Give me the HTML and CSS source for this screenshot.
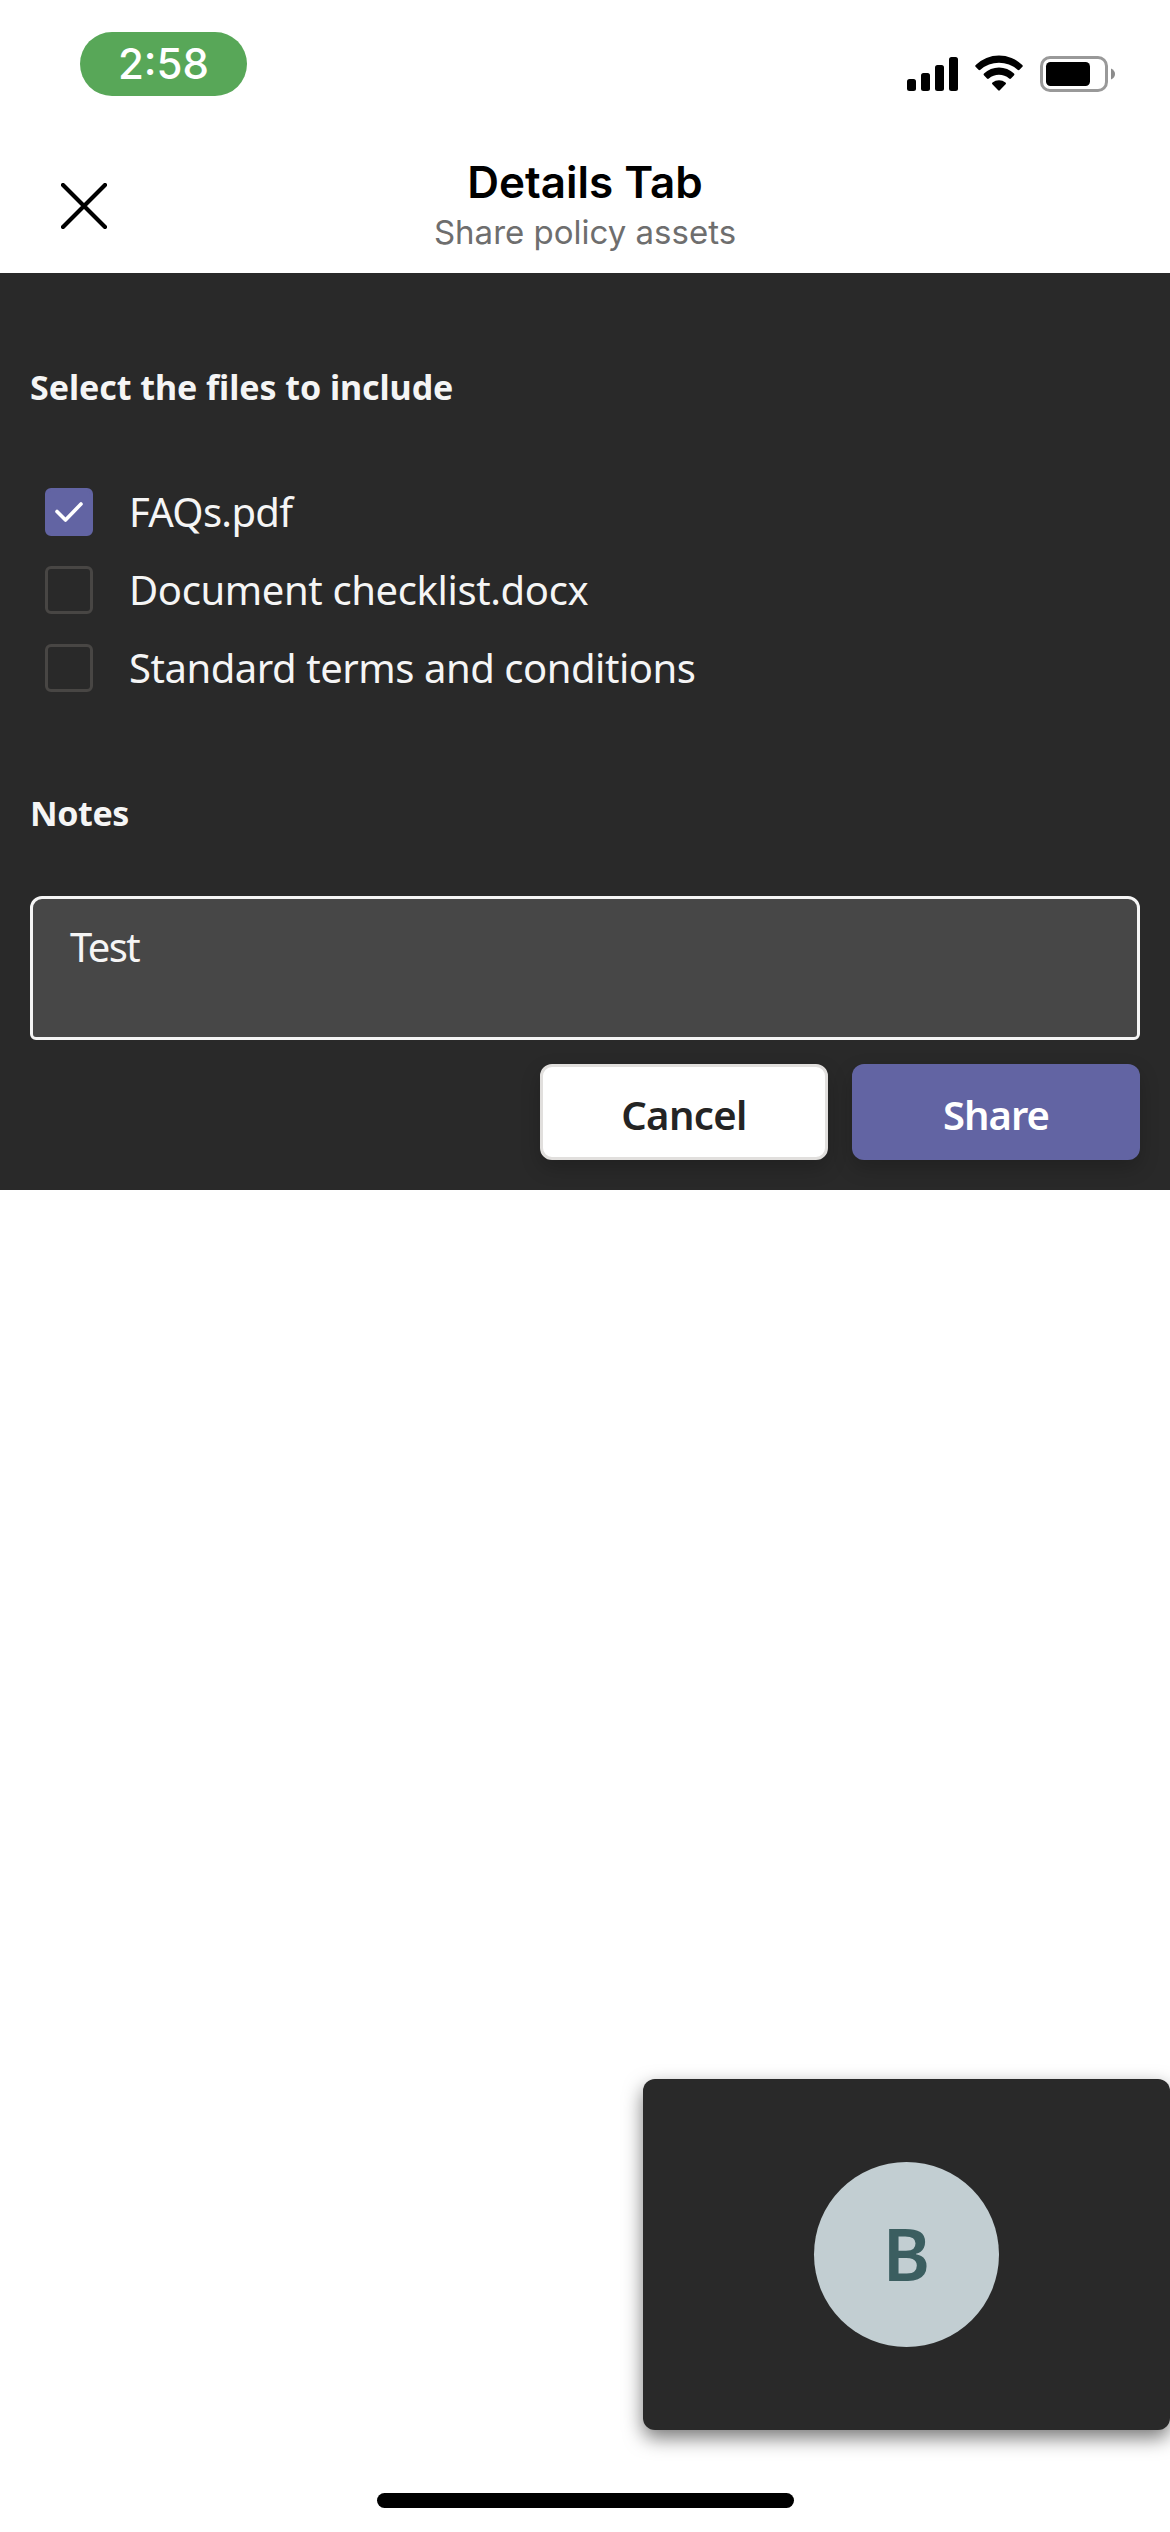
FILE: index.html
```html
<!DOCTYPE html>
<html lang="en">
<head>
<meta charset="utf-8">
<title>Details Tab</title>
<link rel="stylesheet" href="styles.css">
</head>
<body>
<div class="status-bar">
  <div class="time-pill">2:58</div>
  <div class="status-icons">
    <svg class="signal" width="51" height="34" viewBox="0 0 51 34" aria-hidden="true">
      <rect x="0" y="22" width="9" height="12" rx="2.5"/>
      <rect x="14" y="16" width="9" height="18" rx="2.5"/>
      <rect x="28" y="8" width="9" height="26" rx="2.5"/>
      <rect x="42" y="0" width="9" height="34" rx="2.5"/>
    </svg>
    <svg class="wifi" width="48" height="36" viewBox="0 0 48 36" aria-hidden="true">
      <path d="M.7 10A33.5 33.5 0 0 1 47.3 10Q48.2 10.9 47.4 11.7L44.5 14.8Q43.6 15.7 42.6 14.8A28 28 0 0 0 5.4 14.8Q4.4 15.7 3.5 14.8L.6 11.7Q-.2 10.9.7 10Z"/>
      <path d="M9 18.5A21.8 21.8 0 0 1 39 18.5Q39.9 19.4 39.1 20.2L36 23.5Q35.1 24.3 34.1 23.5A15.7 15.7 0 0 0 13.9 23.5Q12.9 24.3 12 23.5L8.9 20.2Q8.1 19.4 9 18.5Z"/>
      <path d="M17.5 27.5A10.5 10.5 0 0 1 30.5 27.5Q31.4 28.4 30.6 29.2L24.8 35.3Q24 36.1 23.2 35.3L17.4 29.2Q16.6 28.4 17.5 27.5Z"/>
    </svg>
    <svg class="battery" width="75" height="36" viewBox="0 0 75 36" aria-hidden="true">
      <rect x="1.5" y="1.5" width="65" height="33" rx="8.5" fill="none" stroke="#999" stroke-width="3"/>
      <rect x="6" y="6" width="44" height="24" rx="4.5"/>
      <path d="M71 12.500Q75 14.500 75 18T71 23.500Z" fill="#8c8c8c"/>
    </svg>
  </div>
</div>
<header class="nav">
  <svg class="close" width="46" height="46" viewBox="0 0 46 46" role="img" aria-label="Close">
    <path d="M2 2 44 44M44 2 2 44"/>
  </svg>
  <div class="titles">
    <h1 class="title">Details Tab</h1>
    <p class="subtitle">Share policy assets</p>
  </div>
</header>
<main class="panel">
  <h2 class="heading">Select the files to include</h2>
  <ul class="files">
    <li class="file">
      <span class="box box-checked">
        <svg width="30" height="22" viewBox="0 0 30 22" aria-hidden="true"><path d="M3 10.5 11.5 19 27 3"/></svg>
      </span>
      <span class="label label-faq">FAQs.pdf</span>
    </li>
    <li class="file"><span class="box"></span><span class="label label-doc">Document checklist.docx</span></li>
    <li class="file"><span class="box"></span><span class="label">Standard terms and conditions</span></li>
  </ul>
  <h2 class="heading heading-notes">Notes</h2>
  <div class="notes">Test</div>
  <div class="actions">
    <button class="btn btn-cancel">Cancel</button>
    <button class="btn btn-share">Share</button>
  </div>
</main>
<aside class="call-tile"><div class="avatar">B</div></aside>
<div class="home-indicator"></div>
</body>
</html>
```

FILE: styles.css
```css
* { box-sizing: border-box; }

body {
  margin: 0;
  width: 1170px;
  height: 2532px;
  display: flex;
  flex-direction: column;
  overflow: hidden;
  background: #fff;
  color: #000;
  font-family: "Noto Sans", sans-serif;
}

.status-bar {
  height: 140px;
  padding: 32px 55px 0 80px;
  display: flex;
  justify-content: space-between;
  align-items: flex-start;
}

.time-pill {
  width: 167px;
  height: 64px;
  padding-top: 6px;
  border-radius: 32px;
  background: #58a758;
  color: #fff;
  font: 500 42px/51px Inter, sans-serif;
  text-align: center;
}

.status-icons {
  display: flex;
  align-items: flex-start;
  padding-top: 23px;
}
.signal { margin: 2px 17px 0 0; }
.wifi { margin-right: 17px; }
.battery { margin-top: 1px; }

.nav {
  height: 133px;
  padding: 15px 61px 0;
  display: grid;
  grid-template-columns: 46px 1fr 46px;
}
.close {
  margin-top: 28px;
  fill: none;
  stroke: #000;
  stroke-width: 4.2;
  stroke-linecap: round;
}
.titles { text-align: center; font-family: Inter, sans-serif; }
.title { margin: 0; font-size: 44px; line-height: 54px; font-weight: 600; }
.subtitle { margin: 3px 0 0; font-size: 33px; line-height: 40px; color: #6e6e6e; }

.panel {
  height: 917px;
  padding: 90px 30px 30px;
  background: #292929;
  color: #f5f5f5;
}
.heading {
  margin: 0;
  font-size: 34px;
  line-height: 49px;
  font-weight: 700;
  letter-spacing: -0.06px;
}
.heading-notes { margin-top: 82px; letter-spacing: -0.4px; }

.files { margin: 61px 0 0; padding: 0 0 0 15px; list-style: none; }
.file {
  height: 78px;
  display: flex;
  align-items: center;
  gap: 36px;
}
.box {
  width: 48px;
  height: 48px;
  display: flex;
  align-items: center;
  justify-content: center;
  border: 3px solid #484644;
  border-radius: 6px;
}
.box-checked { border-color: #6264a3; background: #6264a3; }
.box-checked path {
  fill: none;
  stroke: #fff;
  stroke-width: 3.6;
  stroke-linecap: round;
  stroke-linejoin: round;
}
.label {
  font-size: 40px;
  line-height: 56px;
  letter-spacing: -0.46px;
}
.label-faq { letter-spacing: -0.69px; }
.label-doc { letter-spacing: -0.38px; }

.notes {
  height: 144px;
  margin-top: 58px;
  padding: 20px 37px;
  border: 3px solid #f5f5f5;
  border-radius: 12px 12px 6px 6px;
  background: #474747;
  font-size: 40px;
  line-height: 56px;
  letter-spacing: -1.6px;
}

.actions {
  margin-top: 24px;
  display: flex;
  justify-content: flex-end;
  gap: 24px;
}
.btn {
  width: 288px;
  height: 96px;
  padding: 6px 0 0;
  border: 0;
  border-radius: 12px;
  font: 600 40px/56px "Noto Sans", sans-serif;
  box-shadow: 0 8px 20px rgba(0, 0, 0, .2);
}
.btn-cancel {
  border: 3px solid #e1dfdd;
  background: #fff;
  color: #242424;
  letter-spacing: -0.6px;
}
.btn-share { background: #6264a3; color: #fff; letter-spacing: -1px; }

.call-tile {
  width: 527px;
  height: 351px;
  margin: auto 0 0 auto;
  display: flex;
  align-items: center;
  justify-content: center;
  border-radius: 12px;
  background: #292929;
  box-shadow: 0 8px 19px rgba(0, 0, 0, .53);
}
.avatar {
  width: 185px;
  height: 185px;
  border-radius: 50%;
  background: #c2ced2;
  color: #3b5e60;
  font-size: 72px;
  line-height: 183px;
  font-weight: 600;
  text-align: center;
}

.home-indicator {
  width: 417px;
  height: 15px;
  margin: 63px auto 24px;
  border-radius: 8px;
  background: #000;
}
```
